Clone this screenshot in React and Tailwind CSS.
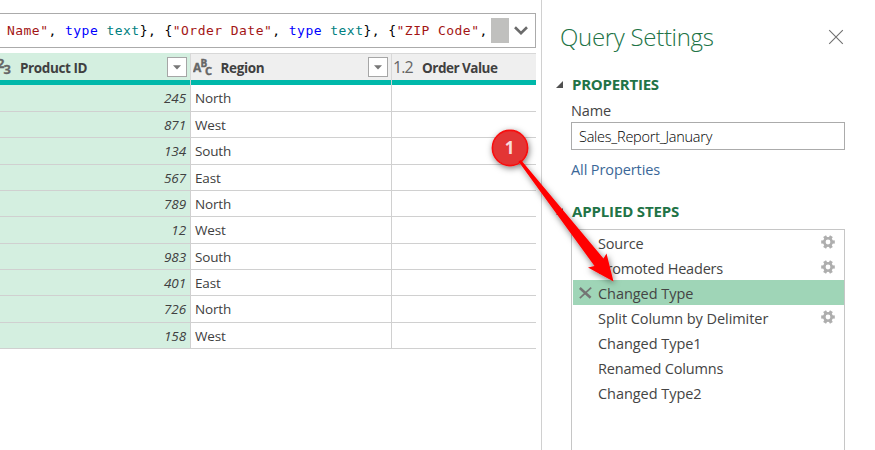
const UI = "font-['Open_Sans','Noto_Sans',sans-serif]";

const rows = [
  { id: '245', region: 'North', h: 'h-[27px]' },
  { id: '871', region: 'West', h: 'h-[26px]' },
  { id: '134', region: 'South', h: 'h-[27px]' },
  { id: '567', region: 'East', h: 'h-[26px]' },
  { id: '789', region: 'North', h: 'h-[26px]' },
  { id: '12', region: 'West', h: 'h-[27px]' },
  { id: '983', region: 'South', h: 'h-[26px]' },
  { id: '401', region: 'East', h: 'h-[26px]' },
  { id: '726', region: 'North', h: 'h-[27px]' },
  { id: '158', region: 'West', h: 'h-[26px]' },
];

const steps = [
  { name: 'Source', gear: true, ls: 'tracking-[-0.2px]' },
  { name: 'Promoted Headers', gear: true, ls: 'tracking-[-0.2px]' },
  { name: 'Changed Type', active: true, ls: 'tracking-[-0.05px]' },
  { name: 'Split Column by Delimiter', gear: true, ls: 'tracking-[-0.06px]' },
  { name: 'Changed Type1', ls: 'tracking-[-0.05px]' },
  { name: 'Renamed Columns', ls: 'tracking-[-0.18px]' },
  { name: 'Changed Type2', ls: 'tracking-[-0.05px]' },
];

function Gear() {
  return (
    <svg width="14" height="14" viewBox="0 0 14 14" className="mb-px block">
      <g fill="#aeaeae">
        {[0, 60, 120].map((a) => (
          <rect key={a} x="0.2" y="5.4" width="13.6" height="3.2" transform={`rotate(${a} 7 7)`} />
        ))}
      </g>
      <circle cx="7" cy="7" r="3.7" fill="#fff" stroke="#aeaeae" strokeWidth="2.6" />
    </svg>
  );
}

function FilterButton() {
  return (
    <div className="flex h-5 w-5 shrink-0 items-center justify-center border border-[#a6a6a6] bg-white">
      <svg width="8" height="5" viewBox="0 0 8 5">
        <path d="M0 0.3H8L4 4.6Z" fill="#777" />
      </svg>
    </div>
  );
}

function Formula() {
  return (
    <div className="flex h-[35px] items-center border-y border-r border-[#ababab] bg-white">
      <div className="w-[491px] shrink-0 whitespace-pre pl-[7px] font-['DejaVu_Sans_Mono',monospace] text-[13px] leading-[20px] tracking-[0.46px] text-black">
        <span className="text-[#a31515]">Name"</span>, <span className="text-[#0000ff]">type</span>{' '}
        <span className="text-[#008080]">text</span>{'}, {'}
        <span className="text-[#a31515]">"Order Date"</span>, <span className="text-[#0000ff]">type</span>{' '}
        <span className="text-[#008080]">text</span>{'}, {'}
        <span className="text-[#a31515]">"ZIP Code"</span>,
      </div>
      <div className="h-[25px] w-[18px] shrink-0 bg-[#c0c0be]" />
      <svg width="14" height="9" viewBox="0 0 14 9" className="ml-[5px] shrink-0">
        <path d="M1 1.3L7 7.2L13 1.3" fill="none" stroke="#6b6b6b" strokeWidth="2.6" />
      </svg>
    </div>
  );
}

function Header() {
  return (
    <div className="mt-[5px] flex h-[27px] text-[13.5px] font-bold text-[#404040]">
      <div className="flex w-[190px] items-center border-t border-[#d3efdf] bg-[#d4efe0] pr-[3px]">
        <svg width="14" height="24" viewBox="0 0 14 24" className="shrink-0">
          <g fill="#666" stroke="#666" strokeWidth="0.3" fontFamily="Open Sans" fontSize="13">
            <text x="-3" y="12.5">2</text>
            <text x="3.5" y="18.5">3</text>
          </g>
        </svg>
        <span className="ml-[6px] flex-1 pt-[2px] tracking-[-0.4px]">Product ID</span>
        <FilterButton />
      </div>
      <div className="flex w-[201px] items-center border-l border-t border-[#d8d8d8] bg-[#efefef] pr-[3px]">
        <svg width="22" height="24" viewBox="0 0 22 24" className="ml-[2px] shrink-0">
          <g fill="#666" stroke="#666" strokeWidth="0.4" fontFamily="Open Sans">
            <text x="0" y="16.5" fontSize="12">A</text>
            <text x="7.6" y="11.5" fontSize="10">B</text>
            <text x="12" y="19.5" fontSize="11">C</text>
          </g>
        </svg>
        <span className="ml-[5.5px] flex-1 pt-[2px] tracking-[-0.35px]">Region</span>
        <FilterButton />
      </div>
      <div className="flex w-[145px] items-center border-l border-t border-[#d8d8d8] bg-[#efefef]">
        <span className="w-[30px] pb-px pl-[1px] text-[16px] font-medium leading-[24px] tracking-[-0.9px] text-[#666]">1.2</span>
        <span className="pt-[2px] tracking-[-0.5px]">Order Value</span>
      </div>
    </div>
  );
}

export default function App() {
  return (
    <div className={`relative flex h-[450px] w-[875px] overflow-hidden bg-white ${UI}`}>
      <div className="flex w-[536px] shrink-0 flex-col pt-[13px]">
        <Formula />
        <Header />
        <div className="flex h-[5px] bg-[#00b8aa]">
          <div className="ml-[190px] w-px bg-[#d0d0d0]" />
          <div className="ml-[200px] w-px bg-[#d0d0d0]" />
        </div>
        {rows.map((r) => (
          <div key={r.id} className={`flex ${r.h} border-b border-[#d0d0d0] text-[13.5px] leading-[26px] text-[#404040]`}>
            <div className="w-[190px] bg-[#d4efe0] pr-[4px] text-right italic tracking-[-0.1px]">{r.id}</div>
            <div className="w-[201px] border-l border-[#d0d0d0] pl-[4px] tracking-[-0.15px]">{r.region}</div>
            <div className="w-[145px] border-l border-[#d0d0d0]" />
          </div>
        ))}
      </div>

      <div className="ml-[5px] flex flex-1 flex-col border-l border-[#d0d0d0] pl-[14px] pr-[30px]">
        <div className="mt-[20px] flex h-[34px] items-center justify-between pl-[4px]">
          <span className="text-[24px] font-light leading-[34px] tracking-[-0.3px] text-[#217346]">Query Settings</span>
          <svg width="16" height="16" viewBox="0 0 16 16" className="mr-[1px]">
            <path d="M1.2 1.2L14.8 14.8M14.8 1.2L1.2 14.8" stroke="#707070" strokeWidth="1.1" />
          </svg>
        </div>

        <div className="mt-[20px] flex h-[20px] items-center">
          <svg width="7" height="7" viewBox="0 0 7 7"><path d="M7 0V7H0Z" fill="#505050" /></svg>
          <span className="ml-[9px] text-[15px] font-bold tracking-[-0.25px] text-[#217346]">PROPERTIES</span>
        </div>
        <div className="pl-[15px]">
          <div className="mt-[7px] h-[20px] text-[14.5px] leading-[20px] tracking-[-0.1px] text-[#444]">Name</div>
          <div className="mt-[1px] h-[28px] w-[274px] border border-[#ababab] pl-[7px] text-[14.5px] font-light leading-[28px] tracking-[-0.25px] text-black">
            Sales_Report_January
          </div>
          <div className="mt-[10px] h-[20px] text-[14.5px] leading-[20px] tracking-[-0.1px] text-[#3b6798]">All Properties</div>
        </div>

        <div className="mt-[21px] flex h-[20px] items-center">
          <svg width="7" height="7" viewBox="0 0 7 7"><path d="M7 0V7H0Z" fill="#505050" /></svg>
          <span className="ml-[9px] text-[15px] font-bold tracking-[-0.15px] text-[#217346]">APPLIED STEPS</span>
        </div>
        <div className="ml-[15px] mt-[8px] h-[240px] w-[274px] shrink-0 border border-[#c6c6c6]">
          {steps.map((s) => (
            <div
              key={s.name}
              className={`ml-px flex h-[25px] items-center pr-[9px] text-[14.5px] text-[#444] ${s.active ? 'bg-[#9fd5b7]' : ''}`}
            >
              <div className="w-[25px] shrink-0 pl-[6px]">
                {s.active && (
                  <svg width="13" height="12" viewBox="0 0 13 12">
                    <path d="M0.8 1L11.6 10.8" stroke="#747474" strokeWidth="2.5" />
                    <path d="M12.2 0.6L0.8 11.2" stroke="#747474" strokeWidth="1.7" />
                  </svg>
                )}
              </div>
              <span className={`flex-1 pt-[2px] leading-[23px] ${s.ls}`}>{s.name}</span>
              {s.gear && <Gear />}
            </div>
          ))}
        </div>
      </div>

      {/* Numbered callout with arrow pointing to the selected step */}
      <svg width="875" height="450" viewBox="0 0 875 450" className="pointer-events-none absolute left-0 top-0">
        <defs>
          <filter id="shadow" x="-30%" y="-30%" width="160%" height="160%">
            <feDropShadow dx="1" dy="2" stdDeviation="3" floodColor="#000" floodOpacity="0.5" />
          </filter>
        </defs>
        <g filter="url(#shadow)">
          <circle cx="510" cy="148" r="17.6" fill="#e33535" stroke="#f81010" strokeWidth="1.6" />
          <path d="M518.5 161.5L521 160L603.5 258.5L606.5 253.5L613.5 281.5L588 267.5L594.5 266L518.5 161.5Z" fill="#ff0000" />
        </g>
        <text x="509.5" y="154" textAnchor="middle" fontFamily="Open Sans" fontWeight="bold" fontSize="17" fill="#f8dcdc">1</text>
      </svg>
    </div>
  );
}
